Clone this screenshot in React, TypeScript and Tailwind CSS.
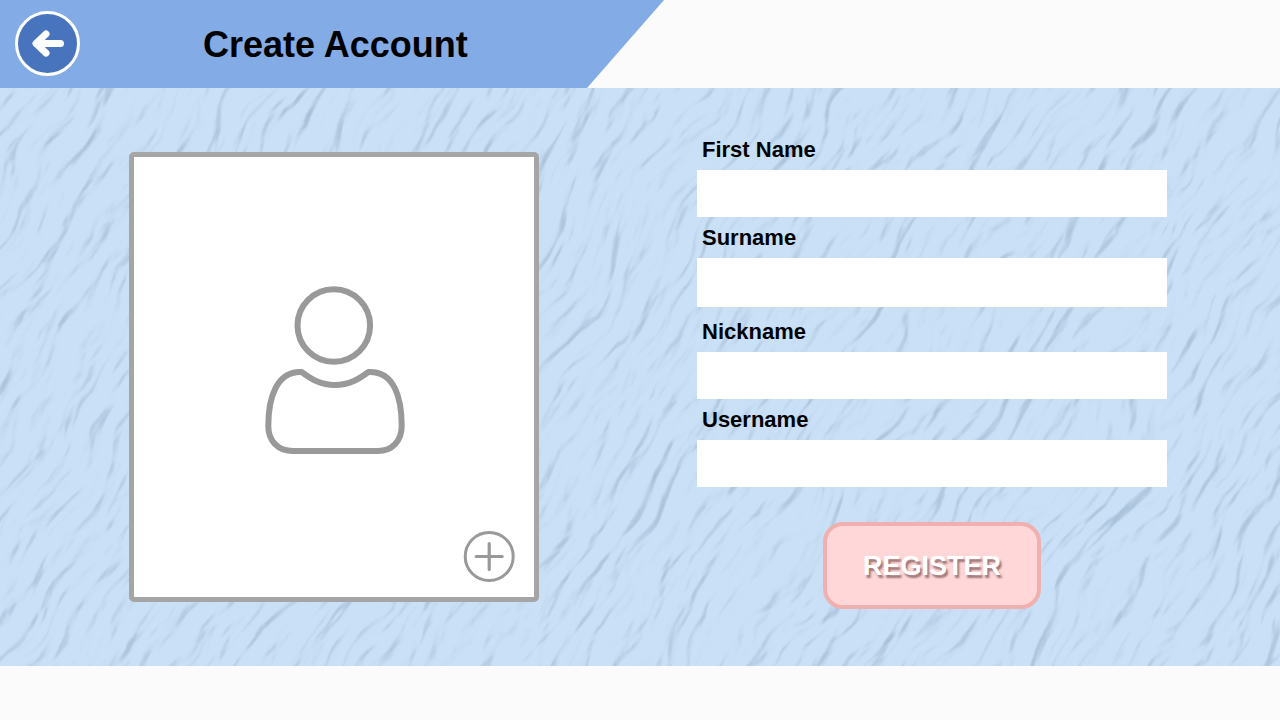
type FieldProps = { id: string; label: string; inputClass?: string };

function Field({ id, label, inputClass = "h-[47px]" }: FieldProps) {
  return (
    <div className="flex flex-col">
      <label
        htmlFor={id}
        className="flex h-[41px] items-center pl-[5px] text-[22px] leading-[26px] font-bold text-black"
      >
        {label}
      </label>
      <input id={id} name={id} type="text" className={`w-full bg-white px-3 text-xl outline-none ${inputClass}`} />
    </div>
  );
}

function PaperTexture() {
  return (
    <svg className="pointer-events-none absolute inset-0 h-full w-full" aria-hidden="true">
      <defs>
        <filter id="paper" filterUnits="userSpaceOnUse" x="-900" y="-900" width="1800" height="1800" colorInterpolationFilters="sRGB">
          <feTurbulence type="fractalNoise" baseFrequency="0.015 0.06" numOctaves="3" seed="8" result="grain" />
          <feTurbulence type="fractalNoise" baseFrequency="0.009" numOctaves="2" seed="4" result="warp" />
          <feDisplacementMap in="grain" in2="warp" scale="45" xChannelSelector="R" yChannelSelector="G" />
          <feColorMatrix values="0 0 0 0 0  0 0 0 0 0  0 0 0 0 0  1 0 0 0 0" />
          <feGaussianBlur stdDeviation="1.2" />
          <feDiffuseLighting surfaceScale="7" diffuseConstant="1.14" lightingColor="#ffffff">
            <feDistantLight azimuth="270" elevation="60" />
          </feDiffuseLighting>
          <feComponentTransfer>
            <feFuncR type="table" tableValues="0.5 0.52 0.54 0.57 0.6 0.64 0.69 0.74 0.775 0.79 0.8" />
            <feFuncG type="table" tableValues="0.6 0.62 0.64 0.67 0.7 0.74 0.78 0.83 0.862 0.877 0.885" />
            <feFuncB type="table" tableValues="0.72 0.73 0.75 0.77 0.8 0.84 0.88 0.92 0.95 0.962 0.967" />
          </feComponentTransfer>
        </filter>
      </defs>
      <g transform="translate(640 290) rotate(-58)">
        <rect x="-900" y="-900" width="1800" height="1800" filter="url(#paper)" opacity="0.5" />
      </g>
    </svg>
  );
}

function BackIcon() {
  return (
    <svg viewBox="0 0 66 66" className="size-[66px]" aria-hidden="true">
      <circle cx="32.500" cy="32.500" r="31" fill="#4874bd" stroke="#fff" strokeWidth="3" />
      <path d="M45.500 32.500H22M31 23 21 32.500l10 9.500" fill="none" stroke="#fff" strokeWidth="7" strokeLinecap="round" strokeLinejoin="round" />
    </svg>
  );
}

function PersonIcon() {
  return (
    <svg viewBox="0 0 142 170" className="h-[170px] w-[142px]" fill="none" stroke="#999" strokeWidth="6" strokeLinejoin="round" aria-hidden="true">
      <circle cx="70.800" cy="41.500" r="36.300" />
      <path d="M38.500 88C14 87 5.300 113 5.300 142C5.300 157 15 167 30 167H115C129 167 138.700 157 138.700 142C138.700 113 131 87 105.500 88C98 93 89 101 72 101C55 101 46 93 38.500 88Z" />
    </svg>
  );
}

function PlusIcon() {
  return (
    <svg viewBox="0 0 52 52" className="size-[52px]" fill="none" stroke="#999" aria-hidden="true">
      <circle cx="26.200" cy="26.500" r="24" strokeWidth="3" />
      <path d="M26.200 13.500V39.500M13.200 26.500H39.200" strokeWidth="3.200" strokeLinecap="round" />
    </svg>
  );
}

export default function App() {
  return (
    <div className="flex min-h-screen flex-col bg-[#fbfbfb] font-['Liberation_Sans',Arial,sans-serif]">
      <header className="flex h-[88px]">
        <div className="flex w-[664px] items-center bg-[#83abe6] pl-[15px] [clip-path:polygon(0_0,100%_0,587px_100%,0_100%)]">
          <button type="button" aria-label="Back" className="rounded-full">
            <BackIcon />
          </button>
          <h1 className="ml-[122px] pt-[2px] text-[36px] leading-10 font-bold text-black">Create Account</h1>
        </div>
      </header>

      <main className="relative overflow-hidden bg-[#c9dff6]">
        <PaperTexture />
        <div className="relative flex items-start justify-between pr-[113px] pb-[57px] pl-[129px]">
          <div className="mt-16 grid h-[450px] w-[410px] rounded-[5px] border-5 border-[#a5a5a5] bg-white">
            <div className="col-start-1 row-start-1 place-self-center pb-4">
              <PersonIcon />
            </div>
            <button type="button" aria-label="Add photo" className="col-start-1 row-start-1 mr-[19px] mb-[15px] self-end justify-self-end rounded-full">
              <PlusIcon />
            </button>
          </div>

          <form className="mt-[41px] flex w-[470px] flex-col" onSubmit={(e) => e.preventDefault()}>
            <Field id="firstName" label="First Name" />
            <Field id="surname" label="Surname" inputClass="h-[49px]" />
            <div className="mt-1 flex flex-col">
              <Field id="nickname" label="Nickname" />
              <Field id="username" label="Username" />
            </div>
            <button
              type="submit"
              className="mt-[35px] h-[87px] w-[218px] self-center rounded-[20px] border-4 border-[#f0b0b0] bg-[#ffd7d8] pt-[2px] text-[27px] font-bold text-white [text-shadow:2px_3px_2px_rgba(80,40,40,0.55)]"
            >
              REGISTER
            </button>
          </form>
        </div>
      </main>
    </div>
  );
}
